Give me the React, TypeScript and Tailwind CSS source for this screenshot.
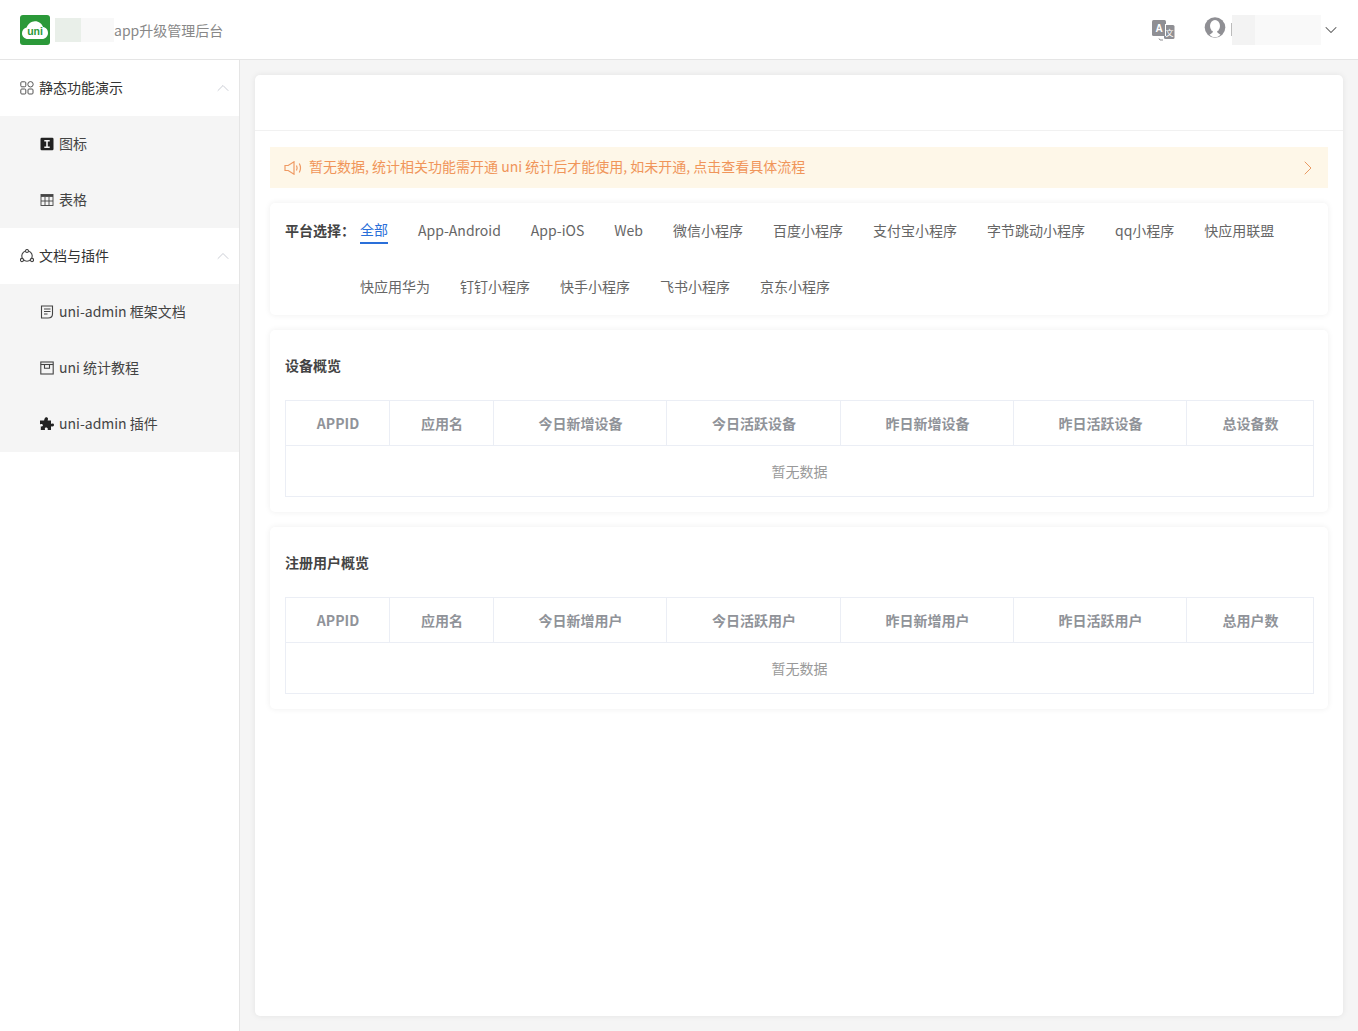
import type { ReactNode } from "react"
import { ChevronDown, ChevronRight, ChevronUp } from "lucide-react"

const platformsRowOne = [
  "App-Android",
  "App-iOS",
  "Web",
  "微信小程序",
  "百度小程序",
  "支付宝小程序",
  "字节跳动小程序",
  "qq小程序",
  "快应用联盟",
]
const platformsRowTwo = ["快应用华为", "钉钉小程序", "快手小程序", "飞书小程序", "京东小程序"]

const deviceCols = ["APPID", "应用名", "今日新增设备", "今日活跃设备", "昨日新增设备", "昨日活跃设备", "总设备数"]
const userCols = ["APPID", "应用名", "今日新增用户", "今日活跃用户", "昨日新增用户", "昨日活跃用户", "总用户数"]

const colWidths = ["w-[104px]", "w-[104px]", "w-[173px]", "w-[174px]", "w-[173px]", "w-[173px]", "w-[128px]"]

function UniLogo() {
  return (
    <svg viewBox="0 0 30 30" className="h-[30px] w-[30px]">
      <rect width="30" height="30" rx="3" fill="#2b9939" />
      <path
        d="M8 24c-3.500 0-6-2.600-6-5.800 0-2.800 1.900-5.100 4.600-5.700C8 9 11.200 6.200 15 6.200c3.900 0 7 2.500 8.100 5.900 3 .4 4.900 3 4.900 5.900 0 3.300-2.600 6-6 6z"
        fill="#fff"
      />
      <text x="15" y="19.500" textAnchor="middle" fontSize="10.500" fontWeight="700" fill="#2b9939" fontFamily="'Liberation Sans', sans-serif">
        uni
      </text>
    </svg>
  )
}

function TranslateIcon() {
  return (
    <svg viewBox="0 0 24 24" className="h-[24px] w-[24px]">
      <rect x="1" y="2" width="14" height="16" rx="1.500" fill="#8f8f94" />
      <rect x="13" y="7" width="10.500" height="14" rx="1.500" fill="#8f8f94" />
      <path d="M14.500 6v12" stroke="#fff" strokeWidth="1" />
      <text x="8" y="13.500" textAnchor="middle" fontSize="10" fontWeight="700" fill="#fff" fontFamily="'Liberation Sans', sans-serif">
        A
      </text>
      <text x="18.500" y="17.500" textAnchor="middle" fontSize="8" fill="#fff" fontFamily="'Noto Sans CJK SC', sans-serif">
        文
      </text>
      <path d="M8 20.500l1 1.500h3" stroke="#8f8f94" strokeWidth="1" fill="none" />
    </svg>
  )
}

function AvatarIcon() {
  return (
    <svg viewBox="0 0 22 22" className="h-[22px] w-[22px]">
      <circle cx="11" cy="10.500" r="10.300" fill="#8f8f94" />
      <ellipse cx="11" cy="9" rx="5" ry="6" fill="#fff" />
      <path d="M8.500 13h5l.5 3 2.500 1.800C15 19.500 13 20.300 11 20.300s-4-.8-5.500-2.500L8 16z" fill="#fff" />
      <path d="M5 16.500c1.300-1 2.300-1.500 3.700-2M17 16.500c-1.300-1-2.300-1.500-3.700-2" stroke="#8f8f94" strokeWidth="1.500" fill="none" />
    </svg>
  )
}

function GridIcon() {
  return (
    <svg viewBox="0 0 14 14" className="h-[14px] w-[14px]" fill="none" stroke="#555" strokeWidth="1">
      <rect x="0.800" y="0.800" width="5" height="5" rx="1" />
      <rect x="0.800" y="8" width="5" height="5" rx="1" />
      <rect x="8" y="8" width="5" height="5" rx="1" />
      <circle cx="10.500" cy="3.300" r="2.700" />
    </svg>
  )
}

function NodesIcon() {
  return (
    <svg viewBox="0 0 14 14" className="h-[14px] w-[14px]" fill="none" stroke="#444" strokeWidth="1.100">
      <circle cx="7" cy="7" r="5.200" />
      <circle cx="7" cy="2" r="1.500" fill="#fff" />
      <circle cx="2" cy="11" r="1.600" fill="#fff" />
      <circle cx="12" cy="11" r="1.600" fill="#fff" />
    </svg>
  )
}

function BookIcon() {
  return (
    <svg viewBox="0 0 14 14" className="h-[14px] w-[14px]">
      <rect x="0.500" y="0.800" width="13" height="12.400" rx="1.200" fill="#222" />
      <path d="M4.300 3h5.400v1.400H7.800v5.200h1.900V11H4.300V9.600h1.900V4.400H4.300z" fill="#f5f5f5" />
    </svg>
  )
}

function TableIcon() {
  return (
    <svg viewBox="0 0 14 14" className="h-[14px] w-[14px]" fill="none" stroke="#444" strokeWidth="0.900">
      <rect x="1" y="1.500" width="12" height="11" />
      <path d="M1 2.800h12" strokeWidth="2.200" />
      <path d="M1 8h12M5 4v8.500M9 4v8.500" />
    </svg>
  )
}

function DocIcon() {
  return (
    <svg viewBox="0 0 14 14" className="h-[14px] w-[14px]" fill="none" stroke="#444" strokeWidth="1.100">
      <path d="M12.500 9V1H1.500v12h6.500" />
      <path d="M4 4h6.500M4 6.500h6.500M4 9h3.500" />
      <path d="M12.500 9c0 2.500-1.500 4-4.500 4" />
    </svg>
  )
}

function WindowIcon() {
  return (
    <svg viewBox="0 0 14 14" className="h-[14px] w-[14px]" fill="none" stroke="#444" strokeWidth="1.100">
      <rect x="0.800" y="1" width="12.400" height="12" />
      <path d="M0.800 3.500h12.400" />
      <path d="M4.500 3.500v3.800h5V3.500" />
    </svg>
  )
}

function PuzzleIcon() {
  return (
    <svg viewBox="0 0 14 14" className="h-[14px] w-[14px]">
      <path
        d="M5.500.5c1.300-.5 2.600.3 2.500 1.500 0 .6-.4 1-.3 1.500h3.300v3.200c.5.200 1-.3 1.500-.3 1.100 0 1.800 1 1.400 2.200-.4 1-1.800 1.100-2.900.6v3.800H7.600c.4-.9.300-1.900-.6-2.300-1.200-.5-2.500.4-2.100 1.600l.2.700H.8V9.300c.9.400 1.700.2 2-.5.400-1.200-.7-2.300-2-1.800l-.8.400V3.500h4.100c.3-1.200.5-2.500 1.400-3z"
        fill="#222"
      />
    </svg>
  )
}

function SpeakerIcon() {
  return (
    <svg viewBox="0 0 18 14" className="mr-[7px] h-[14px] w-[18px]" fill="none" stroke="#ef9a63" strokeWidth="1.200">
      <path d="M1 4.500h3.200L10 .8v12.400L4.200 9.500H1z" />
      <path d="M12.500 4.500c.8 1.600.8 3.400 0 5" />
      <path d="M15.300 2.500c1.500 2.800 1.500 6.200 0 9" />
    </svg>
  )
}

function MenuGroup({ icon, label }: { icon: ReactNode; label: string }) {
  return (
    <div className="flex h-[56px] items-center bg-white pl-[20px] pr-[6px] text-[14px] text-[#333]">
      <span className="mr-[5px] flex w-[14px] justify-center">{icon}</span>
      <span className="flex-1 pb-[2px]">{label}</span>
      <ChevronUp className="h-[20px] w-[20px] text-[#c0c4cc]" strokeWidth={1} />
    </div>
  )
}

function MenuItem({ icon, label }: { icon: ReactNode; label: string }) {
  return (
    <div className="flex h-[56px] items-center bg-[#f5f5f5] pl-[40px] text-[14px] text-[#444]">
      <span className="mr-[5px] flex w-[14px] justify-center">{icon}</span>
      <span className="pb-[2px]">{label}</span>
    </div>
  )
}

function PlatformTab({ label, active }: { label: string; active?: boolean }) {
  return (
    <span
      className={
        active
          ? "mr-[30px] flex h-[26px] items-center border-b-2 border-[#2a6fd9] pb-[2px] text-[14px] text-[#2a6fd9]"
          : "mr-[30px] flex h-[26px] items-center pb-[2px] text-[14px] text-[#666]"
      }
    >
      {label}
    </span>
  )
}

function OverviewCard({ title, cols }: { title: string; cols: string[] }) {
  return (
    <div className="rounded-[5px] bg-white pb-[15px] pl-[15px] pr-[14px] shadow-[0_0_6px_rgba(0,0,0,0.07)]">
      <div className="flex h-[70px] items-center text-[14px] font-bold text-[#444]">{title}</div>
      <div className="border border-[#ebeef5]">
        <div className="flex h-[45px] border-b border-[#ebeef5]">
          {cols.map((col, i) => (
            <div
              key={col}
              className={`${colWidths[i]} flex items-center justify-center border-r border-[#ebeef5] pl-px text-[14px] font-bold text-[#909399] last:flex-1 last:border-r-0`}
            >
              {col}
            </div>
          ))}
        </div>
        <div className="flex h-[50px] items-center justify-center text-[14px] text-[#999]">暂无数据</div>
      </div>
    </div>
  )
}

export default function App() {
  return (
    <div className="flex h-[1031px] flex-col overflow-hidden bg-[#f5f5f5] font-['Noto_Sans_CJK_SC','Noto_Sans',sans-serif]">
      {/* Header */}
      <header className="flex h-[60px] shrink-0 items-center border-b border-[#e5e5e5] bg-white pl-[20px] pr-[17px]">
        <UniLogo />
        <div className="ml-[5px] flex h-[24px] w-[59px]">
          <div className="w-[26px] bg-[#e9efe9]" />
          <div className="flex-1 bg-[#f8f8f8]" />
        </div>
        <span className="pt-[2px] text-[14px] text-[#888]">app升级管理后台</span>
        <div className="ml-auto flex items-center">
          <TranslateIcon />
          <div className="ml-[29px] mb-[3px]">
            <AvatarIcon />
          </div>
          <span className="ml-[5px] h-[13px] w-px bg-[#bbb]" />
          <div className="flex h-[30px] w-[89px] bg-[#f9f9f9]">
            <div className="w-[23px] bg-[#f3f3f3]" />
          </div>
          <ChevronDown className="h-[20px] w-[20px] text-[#555]" strokeWidth={1.250} />
        </div>
      </header>

      <div className="flex min-h-0 flex-1">
        {/* Sidebar */}
        <aside className="w-[240px] shrink-0 border-r border-[#e5e5e5] bg-white">
          <MenuGroup icon={<GridIcon />} label="静态功能演示" />
          <MenuItem icon={<BookIcon />} label="图标" />
          <MenuItem icon={<TableIcon />} label="表格" />
          <MenuGroup icon={<NodesIcon />} label="文档与插件" />
          <MenuItem icon={<DocIcon />} label="uni-admin 框架文档" />
          <MenuItem icon={<WindowIcon />} label="uni 统计教程" />
          <MenuItem icon={<PuzzleIcon />} label="uni-admin 插件" />
        </aside>

        {/* Main */}
        <main className="min-w-0 flex-1 p-[15px]">
          <div className="h-full rounded-[5px] bg-white shadow-[0_0_6px_rgba(0,0,0,0.08)]">
            <div className="h-[56px] border-b border-[#f1f1f1]" />
            <div className="flex flex-col px-[15px] pt-[16px]">
              <div className="flex h-[41px] items-center bg-[#fef7e8] pl-[14px] pr-[8px] text-[14px] text-[#f0955a]">
                <SpeakerIcon />
                <span className="flex-1 pb-[2px]">暂无数据, 统计相关功能需开通 uni 统计后才能使用, 如未开通, 点击查看具体流程</span>
                <ChevronRight className="h-[24px] w-[24px] text-[#e99a62]" strokeWidth={1} />
              </div>

              <div className="mt-[15px] flex rounded-[5px] bg-white pl-[15px] shadow-[0_0_6px_rgba(0,0,0,0.07)]">
                <span className="mt-[17px] w-[75px] text-[14px] font-bold text-[#444]">平台选择：</span>
                <div className="flex flex-col py-[15px]">
                  <div className="flex">
                    <PlatformTab label="全部" active />
                    {platformsRowOne.map((p) => (
                      <PlatformTab key={p} label={p} />
                    ))}
                  </div>
                  <div className="mt-[30px] flex">
                    {platformsRowTwo.map((p) => (
                      <PlatformTab key={p} label={p} />
                    ))}
                  </div>
                </div>
              </div>

              <div className="mt-[15px] flex flex-col gap-[15px]">
                <OverviewCard title="设备概览" cols={deviceCols} />
                <OverviewCard title="注册用户概览" cols={userCols} />
              </div>
            </div>
          </div>
        </main>
      </div>
    </div>
  )
}
